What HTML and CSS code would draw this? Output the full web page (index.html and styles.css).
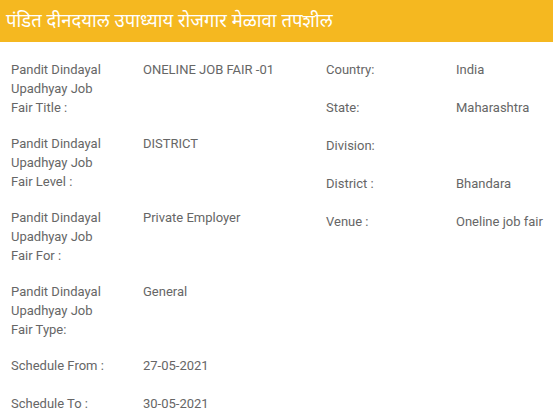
FILE: index.html
```html
<!DOCTYPE html>
<html lang="mr">
<head>
<meta charset="utf-8">
<title>Job Fair Details</title>
<link rel="stylesheet" href="styles.css">
</head>
<body>
<div class="header">पंडित दीनदयाल उपाध्याय रोजगार मेळावा तपशील</div>
<div class="content">
  <div class="col col-left">
    <div class="row"><div class="label">Pandit Dindayal Upadhyay Job Fair Title :</div><div class="value">ONELINE JOB FAIR -01</div></div>
    <div class="row"><div class="label">Pandit Dindayal Upadhyay Job Fair Level :</div><div class="value">DISTRICT</div></div>
    <div class="row"><div class="label">Pandit Dindayal Upadhyay Job Fair For :</div><div class="value">Private Employer</div></div>
    <div class="row"><div class="label">Pandit Dindayal Upadhyay Job Fair Type:</div><div class="value">General</div></div>
    <div class="row"><div class="label">Schedule From :</div><div class="value">27-05-2021</div></div>
    <div class="row"><div class="label">Schedule To :</div><div class="value">30-05-2021</div></div>
  </div>
  <div class="col col-right">
    <div class="row"><div class="label">Country:</div><div class="value">India</div></div>
    <div class="row"><div class="label">State:</div><div class="value">Maharashtra</div></div>
    <div class="row"><div class="label">Division:</div><div class="value"></div></div>
    <div class="row"><div class="label">District :</div><div class="value">Bhandara</div></div>
    <div class="row"><div class="label">Venue :</div><div class="value">Oneline job fair</div></div>
  </div>
</div>
</body>
</html>
```
FILE: styles.css
```css
html, body {
  margin: 0;
  padding: 0;
  background: #ffffff;
}
body {
  font-family: Roboto, "Noto Sans", sans-serif;
  font-size: 13px;
  color: #666666;
}
.header {
  background: #f5b820;
  color: #ffffff;
  height: 42px;
  box-sizing: border-box;
  padding: 6px 6px 0 6px;
  font-family: "Noto Sans", "Noto Sans Devanagari", "Lohit Devanagari", sans-serif;
  font-size: 18.5px;
  line-height: 28px;
}
.content {
  display: flex;
  padding: 0 0 0 11px;
}
.col-left {
  width: 315px;
}
.col {
  display: flex;
  flex-direction: column;
}
.row {
  display: grid;
  grid-template-columns: 132px 1fr;
  grid-auto-rows: minmax(21px, auto);
  padding: 8.5px 0 8.5px 0;
  line-height: 19px;
}
.row:first-child {
  padding-top: 17.5px;
}
.label {
  width: 98px;
}
.col-right .row {
  grid-template-columns: 130px 1fr;
}
```
